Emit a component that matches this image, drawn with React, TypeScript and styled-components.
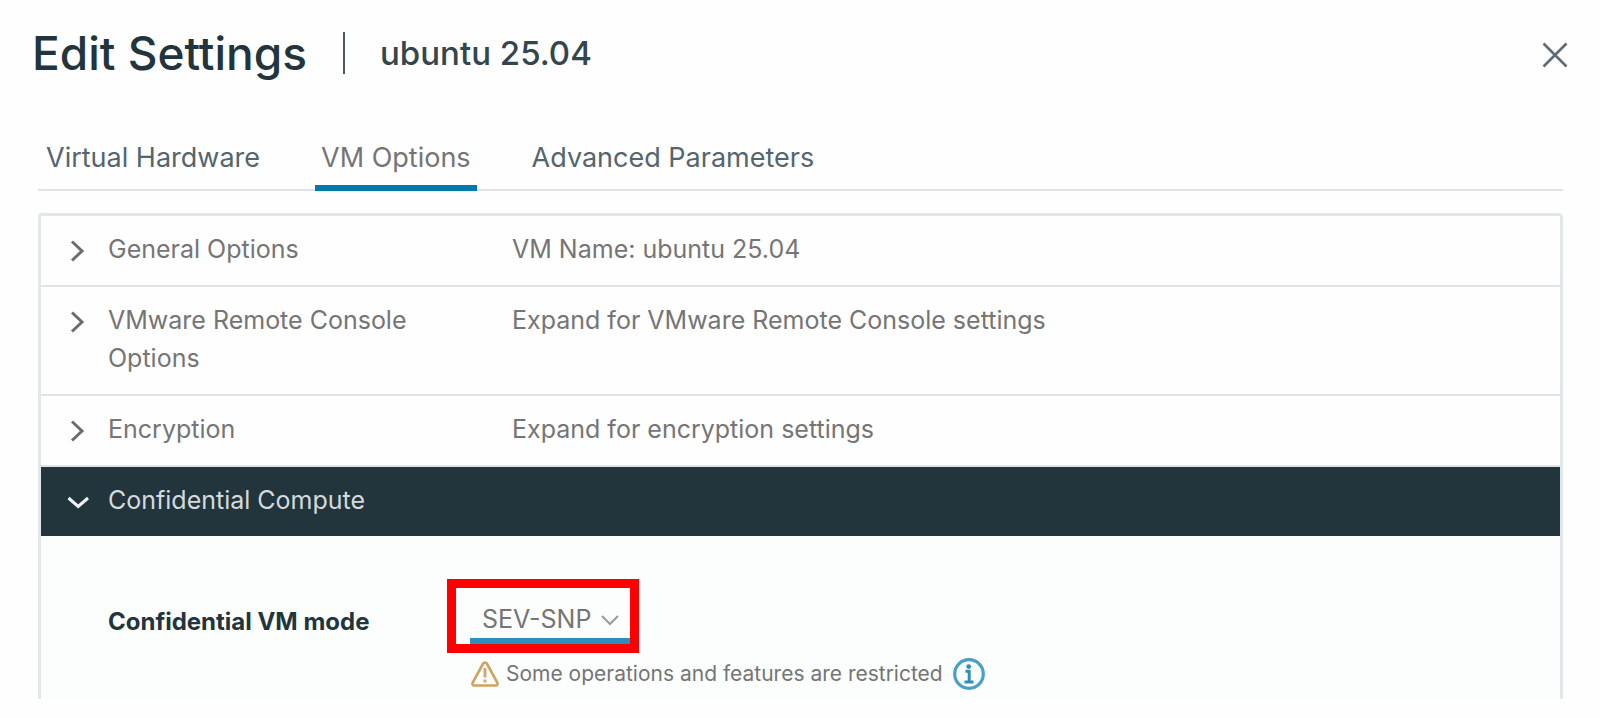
import { useState } from "react";
import styled, { createGlobalStyle } from "styled-components";

const GlobalStyle = createGlobalStyle`
  * {
    box-sizing: border-box;
  }
  body {
    margin: 0;
    background: #fefefe;
    color: #22343c;
    font-family: Inter, "Liberation Sans", sans-serif;
  }
  button, select {
    font-family: inherit;
    margin: 0;
  }
`;

const Dialog = styled.main`
  padding: 22px 37px 20px 38px;
`;

const Header = styled.header`
  display: flex;
  align-items: center;
  height: 62px;
  margin-left: -6px;
`;

const Title = styled.h1`
  margin: 0;
  padding-right: 36px;
  font-size: 46px;
  line-height: 60px;
  font-weight: 500;
  white-space: nowrap;
`;

const Subtitle = styled.p`
  margin: 0;
  padding-left: 35px;
  border-left: 2px solid #4a5a61;
  font-size: 33px;
  line-height: 42px;
  font-weight: 500;
  color: #33454d;
  white-space: nowrap;
`;

const CloseButton = styled.button`
  display: flex;
  margin-left: auto;
  margin-right: -8px;
  padding: 4px 2px 0;
  border: 0;
  background: none;
  cursor: pointer;
`;

const Tabs = styled.div`
  display: flex;
  gap: 49px;
  margin-top: 50px;
  padding-left: 2px;
  border-bottom: 2px solid #dfe5e7;
`;

const Tab = styled.button<{ $active: boolean }>`
  padding: 6px 6px 9px;
  margin-bottom: -2px;
  border: 0;
  border-bottom: 6px solid ${(p) => (p.$active ? "#0079ad" : "transparent")};
  background: none;
  color: ${(p) => (p.$active ? "#757575" : "#54656d")};
  font-size: 27px;
  line-height: 36px;
  white-space: nowrap;
  cursor: pointer;
`;

const Accordion = styled.div`
  margin-top: 22px;
  border: 3px solid #e2e7e9;
  border-bottom: 0;
  border-radius: 4px 4px 0 0;
`;

const RowHeader = styled.button<{ $open: boolean }>`
  display: grid;
  grid-template-columns: 37px 404px 1fr;
  align-items: start;
  width: 100%;
  padding: 14px 30px 17px;
  border: 0;
  border-bottom: ${(p) => (p.$open ? "0" : "2px solid #dfe5e7")};
  background: ${(p) => (p.$open ? "#22343c" : "transparent")};
  color: ${(p) => (p.$open ? "#d5dadc" : "#757575")};
  font-size: 25px;
  line-height: 38px;
  text-align: left;
  cursor: pointer;
`;

const RowLabel = styled.span`
  padding-right: 80px;
`;

const IconSlot = styled.span`
  display: flex;
  margin-left: -4px;
  padding-top: 8px;
`;

const Panel = styled.div`
  display: grid;
  grid-template-columns: 362px 1fr;
  padding: 64px 30px 9px 67px;
  background: #fcfefd;
`;

const FieldLabel = styled.label`
  font-size: 24px;
  line-height: 44px;
  font-weight: 700;
`;

const SelectBox = styled.div`
  position: relative;
  width: 160px;
  border-bottom: 6px solid #2d8fbd;
`;

const ModeSelect = styled.select`
  display: block;
  width: 100%;
  height: 38px;
  padding: 0 0 0 12px;
  border: 0;
  appearance: none;
  background: none;
  color: #757575;
  font-size: 25px;
  line-height: 38px;
`;

const SelectCaret = styled.svg`
  position: absolute;
  right: 11px;
  top: 14px;
  pointer-events: none;
`;

const Highlight = styled.span`
  position: absolute;
  inset: -21px -9px -15px -23px;
  border: 9px solid #ff0000;
  pointer-events: none;
`;

const Hint = styled.p`
  display: flex;
  align-items: center;
  margin: 14px 0 0;
  color: #757575;
  font-size: 21px;
  line-height: 32px;
`;

const HintText = styled.span`
  padding: 0 10px 0 6px;
`;

const InfoButton = styled.button`
  display: flex;
  padding: 0;
  border: 0;
  background: none;
  cursor: pointer;
`;

const Chevron = ({ open }: { open: boolean }) => (
  <svg width="26" height="26" viewBox="0 0 26 26" fill="none" stroke={open ? "#f2f4f4" : "#6c6c6c"} strokeWidth="3" aria-hidden="true">
    {open ? <path d="M1.500 9l9.700 8.500L21 9" /> : <path d="M5 3.500l10 9.500-10 9.500" />}
  </svg>
);

const CloseIcon = () => (
  <svg width="28" height="28" viewBox="0 0 28 28" fill="none" stroke="#5c6c74" strokeWidth="2.6" aria-hidden="true">
    <path d="M2.500 2.500l23 23M25.500 2.500l-23 23" />
  </svg>
);

const WarningIcon = () => (
  <svg width="30" height="28" viewBox="0 0 30 28" fill="none" aria-hidden="true">
    <path d="M13.200 3.500L2.700 22.600c-.8 1.500 0 2.900 1.600 2.900h21.400c1.600 0 2.400-1.400 1.600-2.900L16.800 3.500c-.8-1.400-2.800-1.400-3.600 0z" stroke="#cda35e" strokeWidth="2.600" strokeLinejoin="round" />
    <path d="M15 8v9.500M15 19.500v3" stroke="#cda878" strokeWidth="3" />
  </svg>
);

const InfoIcon = () => (
  <svg width="32" height="32" viewBox="0 0 32 32" fill="none" aria-hidden="true">
    <circle cx="16" cy="16" r="14.300" stroke="#4a9fc7" strokeWidth="3.200" />
    <circle cx="15.700" cy="8.600" r="2.400" fill="#2d8fbd" />
    <path d="M12.500 13.200H16.200V23.800M11.500 24h9" stroke="#2d8fbd" strokeWidth="3" />
  </svg>
);

const tabs = ["Virtual Hardware", "VM Options", "Advanced Parameters"];

const rows = [
  { label: "General Options", value: "VM Name: ubuntu 25.04" },
  { label: "VMware Remote Console Options", value: "Expand for VMware Remote Console settings" },
  { label: "Encryption", value: "Expand for encryption settings" },
];

export default function App() {
  const [active, setActive] = useState("VM Options");

  return (
    <>
      <GlobalStyle />
      <Dialog>
        <Header>
          <Title>Edit Settings</Title>
          <Subtitle>ubuntu 25.04</Subtitle>
          <CloseButton type="button" aria-label="Close">
            <CloseIcon />
          </CloseButton>
        </Header>
        <Tabs role="tablist">
          {tabs.map((tab) => (
            <Tab key={tab} type="button" role="tab" aria-selected={tab === active} $active={tab === active} onClick={() => setActive(tab)}>
              {tab}
            </Tab>
          ))}
        </Tabs>
        <Accordion>
          {rows.map((row) => (
            <RowHeader key={row.label} type="button" aria-expanded={false} $open={false}>
              <IconSlot>
                <Chevron open={false} />
              </IconSlot>
              <RowLabel>{row.label}</RowLabel>
              <span>{row.value}</span>
            </RowHeader>
          ))}
          <RowHeader type="button" aria-expanded={true} $open={true}>
            <IconSlot>
              <Chevron open={true} />
            </IconSlot>
            <RowLabel>Confidential Compute</RowLabel>
          </RowHeader>
          <Panel>
            <FieldLabel htmlFor="vm-mode">Confidential VM mode</FieldLabel>
            <div>
              <SelectBox>
                <ModeSelect id="vm-mode" defaultValue="SEV-SNP">
                  <option>SEV-SNP</option>
                </ModeSelect>
                <SelectCaret width="18" height="14" viewBox="0 0 18 14" fill="none" stroke="#9a9a9a" strokeWidth="2" aria-hidden="true">
                  <path d="M1 2l8 8 8-8" />
                </SelectCaret>
                <Highlight />
              </SelectBox>
              <Hint>
                <WarningIcon />
                <HintText>Some operations and features are restricted</HintText>
                <InfoButton type="button" aria-label="More information">
                  <InfoIcon />
                </InfoButton>
              </Hint>
            </div>
          </Panel>
        </Accordion>
      </Dialog>
    </>
  );
}
